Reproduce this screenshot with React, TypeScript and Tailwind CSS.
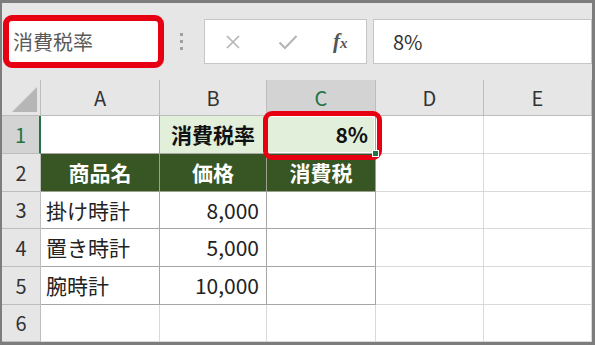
import React from "react";

const font = "font-['Noto_Sans_CJK_JP','Noto_Sans',sans-serif]";

const cols = ["A", "B", "C", "D", "E"];

type Cell = {
  text?: string;
  align?: "left" | "center" | "right";
  kind?: "plain" | "table" | "label" | "head" | "selected";
};

const rows: Cell[][] = [
  [
    { kind: "table" },
    { text: "消費税率", align: "center", kind: "label" },
    { text: "8%", align: "right", kind: "selected" },
    {},
    {},
  ],
  [
    { text: "商品名", align: "center", kind: "head" },
    { text: "価格", align: "center", kind: "head" },
    { text: "消費税", align: "center", kind: "head" },
    {},
    {},
  ],
  [
    { text: "掛け時計", kind: "table" },
    { text: "8,000", align: "right", kind: "table" },
    { kind: "table" },
    {},
    {},
  ],
  [
    { text: "置き時計", kind: "table" },
    { text: "5,000", align: "right", kind: "table" },
    { kind: "table" },
    {},
    {},
  ],
  [
    { text: "腕時計", kind: "table" },
    { text: "10,000", align: "right", kind: "table" },
    { kind: "table" },
    {},
    {},
  ],
  [{}, {}, {}, {}, {}],
];

function GridCell({ cell }: { cell: Cell }) {
  const kind = cell.kind ?? "plain";
  const align =
    cell.align === "right"
      ? "justify-end pr-[7px]"
      : cell.align === "center"
        ? "justify-center"
        : "justify-start pl-[5px]";
  const look =
    kind === "head"
      ? "bg-[#375623] text-white font-bold border-[#9aa28f]"
      : kind === "label" || kind === "selected"
        ? "bg-[#e2efda] text-[#111] font-bold border-[#a6a6a6]"
        : kind === "table"
          ? "bg-white text-[#222] border-[#a6a6a6]"
          : "bg-white border-[#d9d9d9]";

  return (
    <div className={`relative flex items-center border-r border-b text-[21px] leading-none ${align} ${look}`}>
      {kind === "selected" && (
        <>
          <div className="absolute left-0 top-0 right-0 bottom-0 border border-white" />
          <div className="absolute -right-[4px] -bottom-[4px] w-[7px] h-[7px] bg-[#217346] border border-white z-20" />
          <div className="absolute -left-[4px] -top-[5px] -right-[7px] -bottom-[7px] border-[5px] border-[#e60012] rounded-[9px] z-10" />
        </>
      )}
      <span className="relative">{cell.text}</span>
    </div>
  );
}

export default function App() {
  return (
    <div className={`w-[595px] h-[345px] border-l-2 border-t-[3px] border-r-[3px] border-b-[3px] border-[#7d7d7d] bg-[#e6e6e6] flex flex-col overflow-hidden ${font}`}>
      {/* formula bar */}
      <div className="h-[77px] flex items-center shrink-0">
        <div className="ml-px w-[161px] h-[53px] border-[6px] border-[#e60012] rounded-[9px] bg-white flex items-center pl-[4px] text-[20px] text-[#5a5a5a]">
          消費税率
        </div>
        <div className="ml-[16px] w-[3px] flex flex-col gap-[4px]">
          <span className="w-[3px] h-[3px] bg-[#a0a0a0]" />
          <span className="w-[3px] h-[3px] bg-[#a0a0a0]" />
          <span className="w-[3px] h-[3px] bg-[#a0a0a0]" />
        </div>
        <div className="ml-[21px] w-[163px] h-[45px] bg-white border border-[#c6c6c6] flex items-center">
          <svg className="ml-[20px]" width="16" height="16" viewBox="0 0 16 16">
            <path d="M2 2L14 14M14 2L2 14" stroke="#b4b4b4" strokeWidth="1.6" />
          </svg>
          <svg className="ml-[37px]" width="20" height="16" viewBox="0 0 20 16">
            <path d="M1.5 8.5L7 14L18.5 2" fill="none" stroke="#b4b4b4" strokeWidth="2" />
          </svg>
          <span className="ml-[35px] font-['Liberation_Serif',serif] italic font-bold text-[21px] text-[#555] leading-none">
            f<span className="text-[15px]">x</span>
          </span>
        </div>
        <div className="ml-[6px] flex-1 h-[45px] bg-white border border-[#c6c6c6] flex items-center pl-[19px] text-[20px] text-[#333]">
          8%
        </div>
      </div>

      {/* sheet */}
      <div className="grid grid-cols-[39px_119px_107px_109px_108px_1fr] grid-rows-[36px_38px_38px_37px_38px_38px_37px] flex-1">
        <div className="relative bg-[#e6e6e6] border-r border-b border-[#bdbdbd]">
          <svg className="absolute left-[10px] top-[7px]" width="25" height="25" viewBox="0 0 25 25">
            <path d="M25 0V25H0Z" fill="#b6b6b6" />
          </svg>
        </div>
        {cols.map((c) => (
          <div
            key={c}
            className={`flex items-center justify-center border-r border-b text-[20px] border-[#bdbdbd] ${
              c === "C" ? "bg-[#d3d3d3] text-[#217346]" : "bg-[#e6e6e6] text-[#333]"
            }`}
          >
            {c}
          </div>
        ))}
        {rows.map((row, i) => (
          <React.Fragment key={i}>
            <div
              className={`flex items-center justify-center border-b text-[20px] ${
                i === 0
                  ? "bg-[#d3d3d3] text-[#217346] border-r-2 border-[#217346] border-b-[#bdbdbd]"
                  : "bg-[#e6e6e6] text-[#333] border-r border-[#bdbdbd]"
              }`}
            >
              {i + 1}
            </div>
            {row.map((cell, j) => (
              <GridCell key={j} cell={cell} />
            ))}
          </React.Fragment>
        ))}
      </div>
    </div>
  );
}
